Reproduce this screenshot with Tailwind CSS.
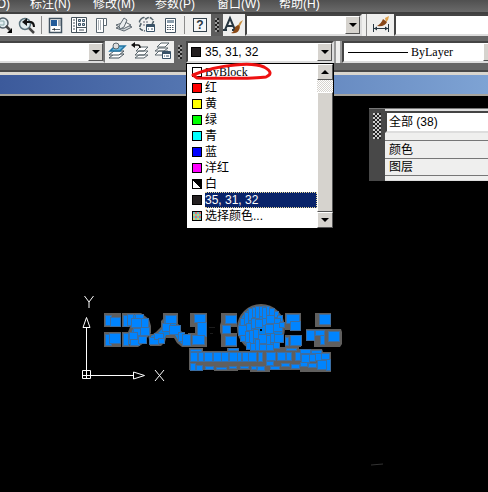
<!DOCTYPE html>
<html lang="zh-CN">
    <head>
        <meta charset="UTF-8" />
        <meta name="viewport" content="width=device-width, initial-scale=1.0" />
        <title>CAD</title>
        <script src="https://cdn.jsdelivr.net/npm/@tailwindcss/browser@4"></script>
    </head>
    <body class="min-h-screen flex flex-col overflow-hidden bg-black text-xs leading-4 text-black font-['Liberation_Sans','Noto_Sans_CJK_SC',sans-serif]">
        <!-- menu bar -->
        <nav class="h-3.5 shrink-0 flex items-end gap-5 overflow-hidden whitespace-nowrap bg-linear-to-b from-[#505050] to-[#6a6a6a] border-b-2 border-[#404040] text-white">
            <button class="w-2.5 flex justify-end">(O)</button>
            <button class="w-[43px] text-left">标注(N)</button>
            <button class="w-[42px] text-left">修改(M)</button>
            <button class="w-[42px] text-left">参数(P)</button>
            <button class="w-[42px] text-left">窗口(W)</button>
            <button class="w-[42px] text-left">帮助(H)</button>
        </nav>

        <!-- standard toolbar -->
        <div class="h-[22px] shrink-0 flex bg-[#5c5c5c]">
            <div class="w-[211px] shrink-0 flex items-center bg-[#efefee] border-b border-white">
                <button aria-label="窗口缩放" class="w-[17px] shrink-0">
                    <svg class="w-4 h-5" viewBox="0 0 16 20" fill="none">
                        <circle cx="3" cy="8" r="5" fill="#e4eef2" stroke="#53616a" stroke-width="1.5" />
                        <path d="M0 6h4v4H0" stroke="#8aa" />
                        <path d="M6 11l4 4" stroke="#444" stroke-width="2.5" />
                        <path d="M12 13v5H7z" fill="#000" />
                    </svg>
                </button>
                <button aria-label="缩放上一个" class="w-6 shrink-0">
                    <svg class="w-5 h-5" viewBox="0 0 20 20" fill="none">
                        <circle cx="8" cy="9" r="5.5" fill="#dfebed" stroke="#5c747e" stroke-width="1.5" />
                        <path d="M12 13l5 5" stroke="#444" stroke-width="2.5" />
                        <path d="M8 7h6q3 1 3 5" stroke="#111" stroke-width="2" />
                        <path d="M5 7l5-4v8z" fill="#111" />
                    </svg>
                </button>
                <span class="w-px h-[18px] bg-[#8c8c8c]"></span>
                <button aria-label="特性" class="w-[26px] shrink-0 flex justify-center">
                    <svg class="w-4 h-5" viewBox="0 0 16 20" fill="none">
                        <path d="M2.5 3.5h12v14h-12z" fill="#fff" stroke="#425361" stroke-width="1.5" />
                        <path d="M4 5h6v6H4z" fill="#245c9a" />
                        <path d="M11 6h3M11 8h3M11 10h3M5 14.5h8" stroke="#5b6975" />
                        <path d="M6 14l2-1v3z" fill="#333" />
                    </svg>
                </button>
                <button aria-label="设计中心" class="w-[22px] shrink-0 flex justify-center">
                    <svg class="w-4 h-5" viewBox="0 0 16 20" fill="none">
                        <path d="M.5 2.5h15v15H.5z" fill="#fff" stroke="#46535c" />
                        <path d="M5.5 2.5v15M5.5 12.5h10" stroke="#46535c" />
                        <path d="M2 5h2M2 8h2M2 11h2M2 14h2M8 15h5" stroke="#46535c" />
                        <path d="M7.5 4.5h2v2h-2zM11.5 4.5h2v2h-2zM7.5 8.5h2v2h-2zM11.5 8.5h2v2h-2z" fill="#b8ccd8" stroke="#3d5365" />
                    </svg>
                </button>
                <button aria-label="工具选项板" class="w-[22px] shrink-0 flex justify-center">
                    <svg class="w-4 h-5" viewBox="0 0 16 20" fill="none">
                        <path d="M3.5 3.5h7v14h-7zM10.5 3.5h3v7h-3" fill="#fff" stroke="#5b6770" />
                        <path d="M5 6h4M5 8h4M5 10h4M5 12h4M5 14h4" stroke="#5b6770" stroke-dasharray="1 1" />
                    </svg>
                </button>
                <button aria-label="图纸集" class="w-[23px] shrink-0 flex justify-center">
                    <svg class="w-5 h-5" viewBox="0 0 20 20" fill="none">
                        <path d="M2 13l9-4 7 3-8 4z" fill="#d5dadd" stroke="#5d6870" />
                        <path d="M2 10l9-3 6 3-8 4z" fill="#f7f7f7" stroke="#5d6870" />
                        <path d="M5 11l5-8 3 2-3 7-4 2z" fill="#e9ecee" stroke="#5d6870" />
                    </svg>
                </button>
                <button aria-label="标记集" class="w-6 shrink-0 flex justify-center">
                    <svg class="w-5 h-5" viewBox="0 0 20 20" fill="none">
                        <path d="M4 4q3-3 5 0q3-3 6 0q3 2 0 5M4 4q-3 3 0 5q-3 4 1 6l3 1" stroke="#52616a" stroke-width="1.5" stroke-dasharray="4 1" />
                        <path d="M6 7h6M6 10h3" stroke="#667" stroke-dasharray="2 1" />
                        <path d="M9.5 9.5h8v7h-8z" fill="#fff" stroke="#385166" />
                        <path d="M10 11h7" stroke="#385166" stroke-width="2" />
                        <path d="M11 14h1M14 14h2" stroke="#385166" />
                    </svg>
                </button>
                <button aria-label="快速计算器" class="w-[21px] shrink-0 flex justify-center">
                    <svg class="w-4 h-5" viewBox="0 0 16 20" fill="none">
                        <path d="M3.5 3.5h10v14h-10z" fill="#fff" stroke="#425361" />
                        <path d="M5 5h7v3H5z" fill="#8a9dac" />
                        <path d="M5 10.5h7M5 12.5h7M5 14.5h7" stroke="#425361" stroke-dasharray="1.5 1" />
                    </svg>
                </button>
                <span class="w-px h-[18px] ml-1 bg-[#8c8c8c]"></span>
                <button aria-label="帮助" class="w-3.5 h-3.5 ml-2 shrink-0 flex items-center justify-center border border-[#33414c] bg-[#f4f6f7] font-bold text-[#26343f]">?</button>
            </div>
            <span class="w-3 shrink-0 p-1"><i class="block h-full bg-[repeating-conic-gradient(#222_0_25%,#999_0_50%)] bg-size-[4px_4px]"></i></span>
            <button aria-label="文字样式" class="w-[22px] shrink-0 bg-[#efefee]">
                <svg class="w-5 h-5" viewBox="0 0 20 20" fill="none">
                    <path d="M2 15L7 3l5 12M4 11h6M0 15h4M9 15h4" stroke="#273640" stroke-width="2" />
                    <path d="M17 7l3-2-4 8-2-1z" fill="#c98e3e" />
                    <path d="M15 10q3 1 1 5-2 4-8 3 4-2 4-6z" fill="#8b4a16" />
                </svg>
            </button>
            <label class="w-[117px] shrink-0 flex bg-white border-2 border-t-[#444] border-l-[#444] border-[#ddd]">
                <select aria-label="文字样式" class="appearance-none flex-1 min-w-0"><option></option></select>
                <span class="w-[15px] flex items-center justify-center bg-[#d6d3ce] border border-white border-r-[#555] border-b-[#555]"><svg class="w-2 h-1" viewBox="0 0 8 4"><path d="M0 0h8L4 4z" /></svg></span>
            </label>
            <span class="w-[5px] shrink-0 bg-[#efefee] border-r border-[#888]"></span>
            <button aria-label="标注样式" class="w-[27px] shrink-0 flex justify-center bg-[#efefee]">
                <svg class="w-5 h-5" viewBox="0 0 20 20" fill="none">
                    <path d="M2.5 10v8M17.5 10v8M3 14.5h14" stroke="#273640" />
                    <path d="M3 14.5l3-2v4zM17 14.5l-3-2v4z" fill="#273640" />
                    <path d="M14 4l4-2-1 4-2 2z" fill="#e0a24c" />
                    <path d="M12 5l4 3q-2 5-10 4 4-2 6-7z" fill="#884719" />
                </svg>
            </button>
            <label class="flex-1 flex bg-white border-2 border-r-0 border-t-[#444] border-l-[#444] border-[#ddd]">
                <select aria-label="标注样式" class="appearance-none flex-1 min-w-0"><option></option></select>
            </label>
        </div>

        <!-- layers and properties toolbar -->
        <div class="shrink-0 flex h-[27px] pt-[5px] bg-[#666] relative z-10">
            <label class="w-[105px] shrink-0 flex bg-white border-2 border-l-0 border-t-[#444] border-[#ddd] border-r-[#777]">
                <select aria-label="图层" class="appearance-none flex-1 min-w-0"><option></option></select>
                <span class="w-[15px] flex items-center justify-center bg-[#d6d3ce] border border-white border-r-[#555] border-b-[#555]"><svg class="w-2 h-1" viewBox="0 0 8 4"><path d="M0 0h8L4 4z" /></svg></span>
            </label>
            <div class="w-[69px] shrink-0 flex bg-[#efefee]">
                <button aria-label="置为当前" class="w-[23px] flex justify-center">
                    <svg class="w-5 h-5" viewBox="0 0 20 20" fill="none">
                        <path d="M2 17l5-4h10l-5 4z" fill="#fff" stroke="#45525b" />
                        <path d="M2 14l5-4h10l-5 4z" fill="#fff" stroke="#45525b" />
                        <path d="M3 10l5-5h10l-5 5z" fill="#65b5dc" stroke="#2475a3" stroke-width="1.5" />
                        <circle cx="9" cy="5" r="3" fill="#ddd" stroke="#5a666d" />
                    </svg>
                </button>
                <button aria-label="上一个图层" class="w-[23px] flex justify-center">
                    <svg class="w-5 h-5" viewBox="0 0 20 20" fill="none">
                        <path d="M5 17l4-3h9l-4 3zM5 14l4-4h9l-4 4zM6 10l4-4h8l-4 4z" fill="#fff" stroke="#5a666d" />
                        <path d="M4 4h4q2 0 2 3" stroke="#111" stroke-width="1.5" />
                        <path d="M1 4l4-3v6z" fill="#111" />
                    </svg>
                </button>
                <button aria-label="图层状态" class="w-[23px] flex justify-center">
                    <svg class="w-5 h-5" viewBox="0 0 20 20" fill="none">
                        <path d="M2 14l4-4h9l-4 4zM2 10l4-3h9l-4 3zM4 6l4-4h8l-4 4z" fill="#fff" stroke="#5a666d" />
                        <path d="M9.5 10.5h8v7h-8z" fill="#fff" stroke="#385166" />
                        <path d="M10 12h7" stroke="#385166" stroke-width="2" />
                        <path d="M11 15h1M13 15h3" stroke="#385166" />
                    </svg>
                </button>
            </div>
            <span class="w-3 shrink-0 p-1"><i class="block h-full bg-[repeating-conic-gradient(#222_0_25%,#999_0_50%)] bg-size-[4px_4px]"></i></span>
            <div class="w-[148px] shrink-0 relative">
                <label class="h-full flex items-center bg-white border-2 border-t-[#444] border-l-[#444] border-[#ddd]">
                    <span class="w-2.5 h-2.5 ml-[3px] bg-[#231f20] border border-black"></span>
                    <select aria-label="颜色" class="appearance-none flex-1 min-w-0 pl-1 leading-4"><option>35, 31, 32</option></select>
                    <span class="w-[15px] h-full flex items-center justify-center bg-[#d6d3ce] border border-white border-r-[#555] border-b-[#555]"><svg class="w-2 h-1" viewBox="0 0 8 4"><path d="M0 0h8L4 4z" /></svg></span>
                </label>
                <!-- open colour list -->
                <div class="absolute left-0 right-0 top-full flex bg-white border border-black">
                    <ul role="listbox" aria-label="颜色" class="flex-1 pb-1">
                        <li role="option" class="h-4 flex items-center pl-[5px] gap-[3px] font-['Liberation_Serif',serif]"><span class="w-2.5 h-2.5 border border-black bg-white"></span>ByBlock</li>
                        <li role="option" class="h-4 flex items-center pl-[5px] gap-[3px]"><span class="w-2.5 h-2.5 border border-black bg-[#ff0000]"></span>红</li>
                        <li role="option" class="h-4 flex items-center pl-[5px] gap-[3px]"><span class="w-2.5 h-2.5 border border-black bg-[#ffff00]"></span>黄</li>
                        <li role="option" class="h-4 flex items-center pl-[5px] gap-[3px]"><span class="w-2.5 h-2.5 border border-black bg-[#00ff00]"></span>绿</li>
                        <li role="option" class="h-4 flex items-center pl-[5px] gap-[3px]"><span class="w-2.5 h-2.5 border border-black bg-[#00ffff]"></span>青</li>
                        <li role="option" class="h-4 flex items-center pl-[5px] gap-[3px]"><span class="w-2.5 h-2.5 border border-black bg-[#0000ff]"></span>蓝</li>
                        <li role="option" class="h-4 flex items-center pl-[5px] gap-[3px]"><span class="w-2.5 h-2.5 border border-black bg-[#ff00ff]"></span>洋红</li>
                        <li role="option" class="h-4 flex items-center pl-[5px] gap-[3px]"><span class="w-2.5 h-2.5 border border-black bg-[linear-gradient(45deg,white_50%,black_50%)]"></span>白</li>
                        <li role="option" aria-selected="true" class="h-4 flex items-center pl-[5px] gap-[3px]"><span class="w-2.5 h-2.5 border border-black bg-[#231f20]"></span><span class="flex-1 h-4 leading-[14px] bg-[#0a246a] border border-l-0 border-dotted border-[#e8d898] text-white">35, 31, 32</span></li>
                        <li role="option" class="h-4 flex items-center pl-[5px] gap-[3px]"><span class="w-2.5 h-2.5 border border-black bg-[repeating-conic-gradient(#e07070_0_25%,#70c8c0_0_50%,#d8c870_0_75%,#70c8c0_0_100%)] bg-size-[4px_4px]"></span>选择颜色...</li>
                    </ul>
                    <div class="w-4 flex flex-col bg-[repeating-conic-gradient(#d6d3ce_0_25%,#fff_0_50%)] bg-size-[2px_2px]">
                        <button aria-label="向上" class="h-4 flex items-center justify-center bg-[#d6d3ce] border border-white border-r-[#555] border-b-[#555]"><svg class="w-2 h-1" viewBox="0 0 8 4"><path d="M0 4h8L4 0z" /></svg></button>
                        <span class="flex-1 mt-3 bg-[#d6d3ce] border border-white border-r-[#555] border-b-[#555]"></span>
                        <button aria-label="向下" class="h-4 flex items-center justify-center bg-[#d6d3ce] border border-white border-r-[#555] border-b-[#555]"><svg class="w-2 h-1" viewBox="0 0 8 4"><path d="M0 0h8L4 4z" /></svg></button>
                    </div>
                    <svg class="absolute left-0 top-0 w-24 h-5 overflow-visible" viewBox="0 0 96 20" fill="none" stroke="#ee1111" stroke-width="3" stroke-linecap="round" stroke-linejoin="round">
                        <path d="M10 14L6 11Q25 3 48 1Q67-1 77 3Q88 9 79 13Q66 15 10 14" />
                    </svg>
                </div>
            </div>
            <span class="w-2 shrink-0 bg-[#efefee] border-x-2 border-[#999]"></span>
            <label class="flex-1 flex items-center bg-white border-2 border-r-0 border-t-[#444] border-l-[#444] border-[#ddd]">
                <span class="w-[60px] h-px ml-1 bg-black"></span>
                <select aria-label="线型" class="appearance-none flex-1 min-w-0 pl-[3px] leading-4 font-['Liberation_Serif',serif]"><option>ByLayer</option></select>
                <span class="w-[5px] h-full bg-[#d6d3ce] border border-r-0 border-white border-b-[#555]"></span>
            </label>
        </div>
        <div class="h-[9px] shrink-0 bg-[#666] border-b-2 border-[#484848]"></div>
        <div class="h-6 shrink-0 bg-linear-to-r from-[#3c5a9b] to-[#7ea3d4] border-t-[3px] border-b-2 border-t-[#d9d6cf] border-b-[#a5a39c]"></div>

        <!-- drawing area -->
        <main class="flex-1 relative bg-black">
            <section aria-label="特性" class="ml-auto mt-3 w-[119px] flex bg-[#484848] border-t border-[#777]">
                <span class="w-4 shrink-0 p-1"><i class="block h-[26px] bg-[repeating-conic-gradient(#222_0_25%,#ccc_0_50%)] bg-size-[4px_4px]"></i></span>
                <div class="flex-1 bg-[#efefee] border-t-2 border-b border-[#ddd]">
                    <select aria-label="选择" class="appearance-none block w-full h-[22px] bg-white border-2 border-r-0 border-t-[#444] border-l-[#444] border-[#ddd] pl-0.5 leading-4"><option>全部 (38)</option></select>
                    <button class="block w-full h-[18px] mt-[7px] pl-1 text-left border-t border-[#777]">颜色</button>
                    <button class="block w-full h-[18px] pl-1 text-left border-y border-[#777]">图层</button>
                    <div class="h-1"></div>
                </div>
            </section>

            <svg class="absolute left-[80px] top-[194px] w-[270px] h-[100px]" viewBox="80 290 270 100" fill="none">
                <g stroke="#fff">
                    <path d="M82.5 370.5h8v8h-8zM86.5 327v51M82 375.5h52M86.5 317.5l3.5 10h-7zM144.5 375.5l-11-3.5v7z" />
                    <path d="M84.500 296l4.500 6 4.500-6M89 302v6M155 370l9 11M164 370l-9 11" />
                </g>
                <g fill="#605f5e">
                    <path d="M104 313h17v14h-17zM104 332h17v15h-17z" />
                    <path d="M122 313h19l4 3 4 3 2 7v7l-4 5-3 5-6 4h-16v-15h6l2-5h-8z" />
                    <path d="M148 334h5l3-2 5-5v-6l2-2v-6h15v11l3 2v5l3 3h7v13h-9l-5-4-3-5h-8l-1 4-4 4h-11z" />
                    <path d="M190 313h17v34h-19v-14h7v-6h-5z" />
                    <path d="M221 313h16v14h-6v6h6v14h-16v-12l-1-3v-7l1-3z" />
                    <circle cx="261" cy="328" r="24" />
                    <path d="M285 313h16v17h-16zM285 335h16v12h-16zM315 313h16v14h-16zM306 329h35l1 3v12l-2 3h-26v-6h-8z" />
                    <path d="M189 348h14v3h24v-3h12v3h30v-4h30v2h23l1 3h8v20h-31v-2h-30v2h-20v-2h-12v1h-24v-1h-25z" />
                </g>
                <circle cx="261" cy="328" r="22" fill="#0080ee" />
                <path d="M124 315h16l8 5 1 10-5 8-6 6h-13v-10h6l3-8h-10zM165 315h11v10l4 5 3 4h5v11h-5l-5-5-3-5h-9l-2 5-4 4h-9v-8l7-3 6-6z" fill="#0080ee" />
                <g id="tiles" fill="#0084ff" stroke="#3b6ea3" shape-rendering="crispEdges"></g>
                <path d="M260 329h2v2h-2z" fill="#000" />
                <path d="M209 327.500h6M210 333.500h3" stroke="#1c1c1c" />
            </svg>
            <svg class="absolute left-[370px] top-[366px] w-4 h-1" viewBox="0 0 16 4" fill="none"><path d="M1 3l12-1" stroke="#333" /></svg>
        </main>

        <script>
            // x, y, width, height of every mosaic piece
            const tiles = [
                [105, 315, 6, 10], [110, 317, 10, 9], [105, 334, 6, 11], [109, 333, 11, 10],
                [123, 315, 5, 11], [127, 314, 6, 11], [135, 314, 8, 6], [131, 318, 10, 9], [141, 318, 7, 9], [133, 328, 8, 7], [140, 327, 9, 8],
                [123, 333, 5, 12], [129, 332, 8, 7], [130, 339, 9, 6], [138, 336, 8, 7],
                [149, 337, 9, 7], [154, 333, 9, 6], [158, 338, 6, 5], [165, 315, 11, 8], [162, 323, 8, 8], [169, 325, 11, 9], [178, 332, 6, 9], [182, 334, 8, 11],
                [194, 314, 11, 8], [197, 322, 9, 14], [192, 335, 12, 9],
                [225, 315, 11, 8], [222, 325, 8, 8], [225, 336, 11, 9],
                [286, 314, 13, 9], [290, 321, 10, 9], [290, 335, 11, 10], [285, 337, 3, 8], [319, 314, 11, 10],
                [306, 330, 8, 10], [315, 330, 9, 5], [320, 335, 4, 9], [328, 331, 11, 10],
                [244, 312, 4, 12], [248, 308, 4, 12], [252, 307, 3, 10], [255, 306, 4, 12], [259, 306, 3, 10], [262, 307, 4, 11], [266, 306, 3, 9], [269, 308, 5, 7], [274, 311, 4, 6], [277, 315, 5, 6],
                [240, 318, 4, 7], [238, 325, 8, 10], [246, 323, 5, 7], [251, 318, 4, 10], [255, 319, 7, 8], [262, 318, 4, 7], [266, 315, 8, 8], [274, 318, 6, 5], [265, 324, 8, 9], [273, 323, 9, 8], [279, 322, 5, 5],
                [240, 335, 5, 6], [245, 331, 4, 11], [249, 330, 4, 14], [253, 329, 5, 9], [258, 334, 8, 9], [266, 335, 4, 10], [270, 333, 4, 9], [274, 334, 9, 8], [246, 342, 4, 7], [250, 343, 5, 7], [255, 339, 4, 11], [259, 344, 7, 6], [266, 344, 7, 6], [273, 342, 6, 6],
                [190, 352, 7, 9], [198, 352, 5, 9], [204, 352, 8, 9], [213, 352, 8, 9], [221, 352, 7, 9], [229, 352, 8, 9], [237, 352, 4, 9], [242, 352, 6, 9], [248, 352, 8, 9], [258, 352, 4, 9], [266, 352, 9, 8], [277, 352, 8, 8], [286, 352, 5, 8],
                [295, 352, 5, 8], [300, 349, 10, 4], [311, 350, 10, 3], [301, 354, 8, 8], [309, 354, 6, 7], [315, 353, 6, 7], [321, 353, 8, 6], [317, 360, 10, 9], [326, 359, 4, 11],
                [190, 363, 5, 7], [196, 365, 6, 5], [205, 366, 8, 3], [216, 367, 10, 2], [229, 366, 7, 2], [240, 366, 8, 2], [251, 366, 5, 3], [257, 366, 7, 4], [266, 361, 7, 4], [270, 366, 9, 3], [281, 363, 8, 3], [291, 364, 8, 4], [300, 362, 7, 4], [308, 363, 8, 4],
                [190, 349, 11, 2], [228, 348, 10, 2], [286, 348, 10, 2]
            ];
            const group = document.getElementById('tiles');
            for (const [x, y, width, height] of tiles) {
                const rect = document.createElementNS('http://www.w3.org/2000/svg', 'rect');
                rect.setAttribute('x', x + 0.5);
                rect.setAttribute('y', y + 0.5);
                rect.setAttribute('width', width);
                rect.setAttribute('height', height);
                group.appendChild(rect);
            }
        </script>
    </body>
</html>
